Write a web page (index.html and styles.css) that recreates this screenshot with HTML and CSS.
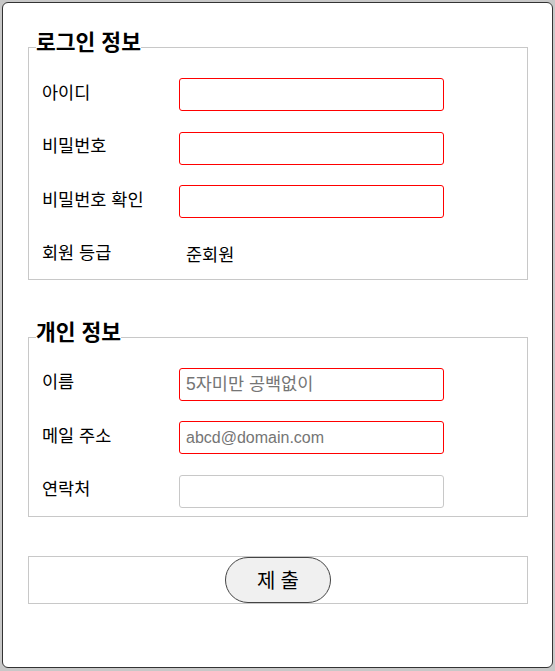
FILE: index.html
```html
<!DOCTYPE html>
<html lang="ko">
<head>
<meta charset="utf-8">
<title>회원 가입</title>
<link rel="stylesheet" href="styles.css">
</head>
<body>
<form class="card">
  <fieldset class="group group-login">
    <legend class="group-title">로그인 정보</legend>
    <div class="rows">
      <div class="row">
        <label class="label" for="uid">아이디</label>
        <input class="field field-required" id="uid" type="text">
      </div>
      <div class="row">
        <label class="label" for="pw">비밀번호</label>
        <input class="field field-required" id="pw" type="password">
      </div>
      <div class="row">
        <label class="label" for="pw2">비밀번호 확인</label>
        <input class="field field-required" id="pw2" type="password">
      </div>
      <div class="row row-text">
        <span class="label">회원 등급</span>
        <span class="value">준회원</span>
      </div>
    </div>
  </fieldset>

  <fieldset class="group group-personal">
    <legend class="group-title">개인 정보</legend>
    <div class="rows">
      <div class="row">
        <label class="label" for="name">이름</label>
        <input class="field field-required field-ko" id="name" type="text" placeholder="5자미만 공백없이">
      </div>
      <div class="row">
        <label class="label" for="mail">메일 주소</label>
        <input class="field field-required" id="mail" type="text" placeholder="abcd@domain.com">
      </div>
      <div class="row">
        <label class="label" for="tel">연락처</label>
        <input class="field" id="tel" type="text">
      </div>
    </div>
  </fieldset>

  <fieldset class="group group-actions">
    <button class="submit" type="submit">제출</button>
  </fieldset>
</form>
</body>
</html>
```

FILE: styles.css
```css
html, body {
  margin: 0;
  padding: 0;
}

body {
  background: #c8c8c8;
  padding: 2px;
  font-family: "Noto Sans CJK KR", "Noto Sans", sans-serif;
  color: #000;
}

.card {
  box-sizing: border-box;
  width: 551px;
  height: 666px;
  margin: 0;
  background: #fff;
  border: 1px solid #333;
  border-radius: 6px;
  padding: 28px 24px 0 25px;
  display: flex;
  flex-direction: column;
}

.group {
  margin: 0;
  border: 1px solid #c8c8c8;
  padding: 14px 7px 10px 7px;
  min-width: 0;
}

.group-personal {
  margin-top: 41px;
  padding-bottom: 8px;
}

.group-actions {
  margin-top: 39px;
  padding: 0;
  text-align: center;
}

.group-title {
  padding: 0 0 13px 0;
  font-size: 21.5px;
  line-height: 20px;
  font-weight: bold;
}

.rows {
  display: flex;
  flex-direction: column;
  gap: 20.5px;
  padding-left: 6px;
}

.row {
  display: flex;
  align-items: center;
}

.row-text {
  min-height: 30px;
}

.label {
  width: 137px;
  flex: none;
  font-size: 17.5px;
  line-height: 20px;
  margin-bottom: 6px;
}

.row-text .label {
  margin-bottom: 4px;
}

.value {
  padding-left: 7px;
  font-size: 17.5px;
  line-height: 20px;
}

.field {
  box-sizing: border-box;
  width: 265px;
  height: 33px;
  margin: 0;
  padding: 0 6px;
  border: 1px solid #c8c8c8;
  border-radius: 3px;
  background: #fff;
  font-family: "Liberation Sans", "Noto Sans CJK KR", sans-serif;
  font-size: 16px;
  color: #000;
  outline: none;
}

.field-ko {
  font-size: 17.5px;
}

.field::placeholder {
  color: #757575;
}

.field-required {
  border-color: #ff0000;
}

.submit {
  box-sizing: border-box;
  width: 106px;
  height: 46px;
  margin: 0;
  padding: 0 0 0 5px;
  border: 1px solid #444;
  border-radius: 23px;
  background: #f0f0f0;
  font-family: "Noto Sans CJK KR", sans-serif;
  font-size: 20px;
  letter-spacing: 5px;
  color: #000;
  vertical-align: top;
}
```
